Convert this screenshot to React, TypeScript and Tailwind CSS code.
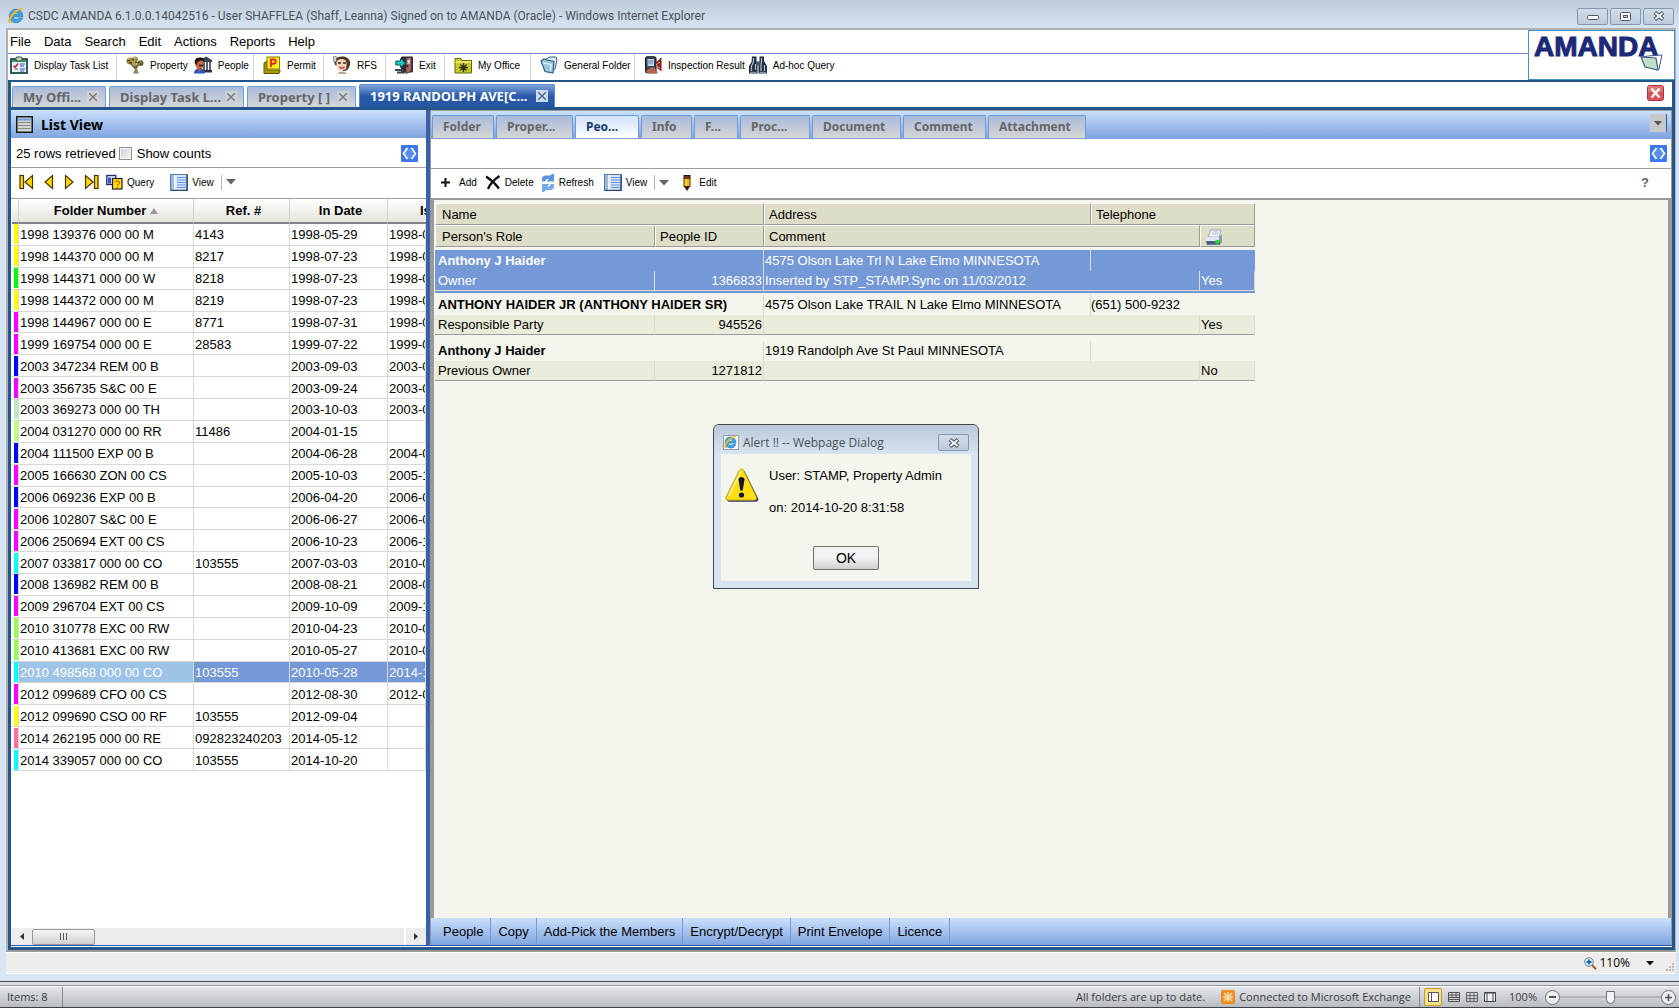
import { useState, type ReactNode } from "react";
import clsx from "clsx";

type FolderRow = {
  color: string;
  folder: string;
  ref: string;
  inDate: string;
  issued: string;
};

const YELLOW = "bg-[#ffff00]";
const LIME = "bg-[#00ff00]";
const MAGENTA = "bg-[#ff00ff]";
const BLUE = "bg-[#0000ff]";
const CYAN = "bg-[#00ffff]";
const SAGE = "bg-[#c0e8c8]";
const PALE_GREEN = "bg-[#c0ff80]";
const GREEN = "bg-[#98ff50]";
const PINK = "bg-[#ff70a0]";

const FOLDERS: FolderRow[] = [
  { color: YELLOW, folder: "1998 139376 000 00 M", ref: "4143", inDate: "1998-05-29", issued: "1998-0" },
  { color: YELLOW, folder: "1998 144370 000 00 M", ref: "8217", inDate: "1998-07-23", issued: "1998-0" },
  { color: LIME, folder: "1998 144371 000 00 W", ref: "8218", inDate: "1998-07-23", issued: "1998-0" },
  { color: YELLOW, folder: "1998 144372 000 00 M", ref: "8219", inDate: "1998-07-23", issued: "1998-0" },
  { color: MAGENTA, folder: "1998 144967 000 00 E", ref: "8771", inDate: "1998-07-31", issued: "1998-0" },
  { color: MAGENTA, folder: "1999 169754 000 00 E", ref: "28583", inDate: "1999-07-22", issued: "1999-0" },
  { color: BLUE, folder: "2003 347234 REM 00 B", ref: "", inDate: "2003-09-03", issued: "2003-0" },
  { color: MAGENTA, folder: "2003 356735 S&C 00 E", ref: "", inDate: "2003-09-24", issued: "2003-0" },
  { color: SAGE, folder: "2003 369273 000 00 TH", ref: "", inDate: "2003-10-03", issued: "2003-0" },
  { color: PALE_GREEN, folder: "2004 031270 000 00 RR", ref: "11486", inDate: "2004-01-15", issued: "" },
  { color: BLUE, folder: "2004 111500 EXP 00 B", ref: "", inDate: "2004-06-28", issued: "2004-0" },
  { color: MAGENTA, folder: "2005 166630 ZON 00 CS", ref: "", inDate: "2005-10-03", issued: "2005-1" },
  { color: BLUE, folder: "2006 069236 EXP 00 B", ref: "", inDate: "2006-04-20", issued: "2006-0" },
  { color: MAGENTA, folder: "2006 102807 S&C 00 E", ref: "", inDate: "2006-06-27", issued: "2006-0" },
  { color: MAGENTA, folder: "2006 250694 EXT 00 CS", ref: "", inDate: "2006-10-23", issued: "2006-1" },
  { color: CYAN, folder: "2007 033817 000 00 CO", ref: "103555", inDate: "2007-03-03", issued: "2010-0" },
  { color: BLUE, folder: "2008 136982 REM 00 B", ref: "", inDate: "2008-08-21", issued: "2008-0" },
  { color: MAGENTA, folder: "2009 296704 EXT 00 CS", ref: "", inDate: "2009-10-09", issued: "2009-1" },
  { color: GREEN, folder: "2010 310778 EXC 00 RW", ref: "", inDate: "2010-04-23", issued: "2010-0" },
  { color: GREEN, folder: "2010 413681 EXC 00 RW", ref: "", inDate: "2010-05-27", issued: "2010-0" },
  { color: CYAN, folder: "2010 498568 000 00 CO", ref: "103555", inDate: "2010-05-28", issued: "2014-1" },
  { color: MAGENTA, folder: "2012 099689 CFO 00 CS", ref: "", inDate: "2012-08-30", issued: "2012-0" },
  { color: YELLOW, folder: "2012 099690 CSO 00 RF", ref: "103555", inDate: "2012-09-04", issued: "" },
  { color: PINK, folder: "2014 262195 000 00 RE", ref: "092823240203", inDate: "2014-05-12", issued: "" },
  { color: CYAN, folder: "2014 339057 000 00 CO", ref: "103555", inDate: "2014-10-20", issued: "" },
];

const PEOPLE = [
  {
    name: "Anthony J Haider",
    role: "Owner",
    id: "1366833",
    address: "4575 Olson Lake Trl N Lake Elmo MINNESOTA",
    comment: "Inserted by STP_STAMP.Sync on 11/03/2012",
    phone: "",
    print: "Yes",
    gap: "h-[3px]",
  },
  {
    name: "ANTHONY HAIDER JR (ANTHONY HAIDER SR)",
    role: "Responsible Party",
    id: "945526",
    address: "4575 Olson Lake TRAIL N Lake Elmo MINNESOTA",
    comment: "",
    phone: "(651) 500-9232",
    print: "Yes",
    gap: "h-[2px]",
  },
  {
    name: "Anthony J Haider",
    role: "Previous Owner",
    id: "1271812",
    address: "1919 Randolph Ave St Paul MINNESOTA",
    comment: "",
    phone: "",
    print: "No",
    gap: "h-[6px]",
  },
];

const MENUS = ["File", "Data", "Search", "Edit", "Actions", "Reports", "Help"];

const SUB_TABS = [
  { label: "Folder", width: "w-[62px]" },
  { label: "Proper...", width: "w-[77px]" },
  { label: "Peo...", width: "w-[64px]" },
  { label: "Info", width: "w-[51px]" },
  { label: "F...", width: "w-[44px]" },
  { label: "Proc...", width: "w-[70px]" },
  { label: "Document", width: "w-[89px]" },
  { label: "Comment", width: "w-[83px]" },
  { label: "Attachment", width: "w-[98px]" },
];

const ACTIONS = ["People", "Copy", "Add-Pick the Members", "Encrypt/Decrypt", "Print Envelope", "Licence"];

/* ---------- icons ---------- */

function IeIcon({ size = 16 }: { size?: number }) {
  return (
    <svg width={size} height={size} viewBox="0.5 1 15 14.5" aria-hidden="true" className="shrink-0">
      <path
        d="M8 1.800a6.400 6.400 0 1 0 6.100 8.400h-3.600a2.800 2.800 0 0 1-5.200-1.200h9.100A6.400 6.400 0 0 0 8 1.800zM5.400 6.900a2.700 2.700 0 0 1 5.200 0z"
        fill="#3fa4e0"
        stroke="#1d77bd"
        strokeWidth=".6"
      />
      <path
        d="M1.600 14.600C-.6 12.400 3.200 5.400 8.600 2.400 12.400.3 15.600.2 15.300 3.400c.1-1.800-2.300-1.800-5 .1C5.800 6.300 2.100 11.400 2.800 13.400c.3.9 1.600.9 3.100.1-1.700 1.300-3.500 1.900-4.300 1.100z"
        fill="#f2b41f"
      />
    </svg>
  );
}

function TaskIcon() {
  return (
    <svg width="18" height="18" viewBox="0 0 18 18" aria-hidden="true">
      <rect x="1" y="3" width="16" height="14" fill="#e9f2ff" stroke="#1c4a4a" strokeWidth="1.800" />
      <rect x="2" y="4" width="14" height="2" fill="#3d9a5c" />
      <rect x="6" y="1" width="6" height="4" rx="1" fill="#c9d6a0" stroke="#345" />
      <path d="M3.500 9.500l1.500 2 3-4" fill="none" stroke="#d02040" strokeWidth="1.600" />
      <path d="M10 8h5M10 10h4M5 13h3M10 13h5M10 15h4" stroke="#2a50b0" />
    </svg>
  );
}

function TreeIcon() {
  return (
    <svg width="18" height="18" viewBox="0 0 18 18" aria-hidden="true">
      <path d="M8 8l1 5-2 4.500h6l-2-4.500 2-4" fill="#8c8a5a" />
      <path d="M5 8l4 4 4-4" fill="none" stroke="#6b5a2c" strokeWidth="1.600" />
      <circle cx="4" cy="5" r="3.500" fill="#a08a44" />
      <circle cx="9" cy="3.500" r="3" fill="#9a9448" />
      <circle cx="14.500" cy="7" r="3" fill="#6f7a3c" />
      <circle cx="8" cy="7" r="2.500" fill="#c09a4c" />
      <path d="M1 5l3-1M6 3l2 1M12 7l3-2M9 6l3 1M14 9l3-1M3 7l3 0" stroke="#47491c" strokeWidth="1.300" />
      <path d="M2 3h2M8 2h2M13 5h2" stroke="#e8cf7c" />
    </svg>
  );
}

function PeopleIcon() {
  return (
    <svg width="18" height="18" viewBox="0 0 18 18" aria-hidden="true">
      <path d="M6 4l6-3.500L18 4v2H6z" fill="#3c4452" />
      <path d="M9 6h2v9H9zM12 6h2v9h-2zM15 6h2v9h-2z" fill="#5a6578" />
      <rect x="8" y="14" width="10" height="2.500" fill="#2c333e" />
      <path d="M1 6c1-3.500 7-4 8-1v5c0 2-1 3.500-3.500 3.500S1.500 11 1.500 9z" fill="#c96b3d" />
      <path d="M1 8c-1.500-5 2-7 6-6.500 2.500.3 3.500 1.500 3 3.500L7 4.500 3.500 6 2.500 9z" fill="#25150e" />
      <path d="M5 9.500h4" stroke="#3a1b10" strokeWidth="1.600" />
      <path d="M0 17.500c0-3 2-5 5.500-5s5.500 2 5.500 5z" fill="#2858b8" />
      <path d="M4 12.500l1 4 2.500-4z" fill="#e24030" />
    </svg>
  );
}

function PermitIcon() {
  return (
    <svg width="18" height="18" viewBox="0 0 18 18" aria-hidden="true">
      <path d="M1 7l3-2v9h13v1l-1 2.500H1z" fill="#a8a000" stroke="#5a5200" />
      <rect x="4" y="1" width="12.500" height="12" fill="#ffee20" stroke="#8a7a00" />
      <path d="M8 11V3.500h2.700a2.100 2.100 0 0 1 0 4.200H8" fill="none" stroke="#e02818" strokeWidth="1.900" />
    </svg>
  );
}

function RfsIcon() {
  return (
    <svg width="18" height="18" viewBox="0 0 18 18" aria-hidden="true">
      <path d="M2 9C0 3 5 0 9.500.5 14 0 18 4 17 9l-2 4z" fill="#4a3424" />
      <path d="M3.500 6c1-4 9-4 10 0 .5 5-.5 9-4.500 10-4-1-6-5-5.500-10z" fill="#f3d3b8" />
      <path d="M5 7h3M10 7h3" stroke="#2b2420" strokeWidth="1.400" />
      <path d="M6.500 11c1.500 1.500 3.500 1.500 5 0" fill="none" stroke="#b5302a" strokeWidth="1.400" />
      <rect x=".5" y="0" width="3" height="6" rx="1.500" fill="#d4d4d4" stroke="#555" strokeWidth=".6" />
      <path d="M15 9c.5 4-1.500 5.500-5 5.500" fill="none" stroke="#333" strokeWidth="1.200" />
      <path d="M6 16h6l2 2H5z" fill="#b8a890" />
    </svg>
  );
}

function ExitIcon() {
  return (
    <svg width="18" height="18" viewBox="0 0 18 18" aria-hidden="true">
      <path d="M6.500 1h11v15h-11z" fill="#2a2f36" stroke="#40302e" />
      <path d="M11 2l5.500-1v14L11 17.500z" fill="#a8645c" stroke="#333" strokeWidth=".8" />
      <path d="M12.500 4l2.500-.5v4l-2.500.5z" fill="#cfd4da" />
      <circle cx="12.500" cy="10" r=".9" fill="#111" />
      <path d="M0 13h9v2H0zM2 15.500h8v2H2z" fill="#3a4450" />
      <path d="M.8 5h4.700V2.500L10.500 7 5.500 11.500V9H.8z" fill="#22c4c0" stroke="#06605e" />
    </svg>
  );
}

function OfficeIcon() {
  return (
    <svg width="18" height="18" viewBox="0 0 18 18" aria-hidden="true">
      <path d="M1 2.500h6l1 2h9.500v12.500H1z" fill="#c8c828" stroke="#6a6408" />
      <path d="M1.500 6h15.500" stroke="#f4f080" strokeWidth="1.500" />
      <path d="M9.500 7v9M5 11.500h9M6.500 8.500l6 6M12.500 8.500l-6 6" stroke="#33300a" strokeWidth="1.300" />
    </svg>
  );
}

function FolderIcon() {
  return (
    <svg width="18" height="18" viewBox="0 0 18 18" aria-hidden="true">
      <path d="M6 3l4-2h6l1 3-2 9-4 3z" fill="#e4f0f8" stroke="#3b5f80" />
      <path d="M1 5l3-2 3 1 7 1.500-1 11.500-8-1.500z" fill="#9cc8dc" stroke="#2f5f88" strokeWidth="1.200" />
      <path d="M3 7l8 1.500-.5 6" fill="none" stroke="#e4f6ff" strokeWidth="1.200" />
    </svg>
  );
}

function InspectionIcon() {
  return (
    <svg width="18" height="18" viewBox="0 0 18 18" aria-hidden="true">
      <rect x="1.500" y=".8" width="10.500" height="16" rx="1.500" fill="#3a4452" stroke="#11161d" />
      <rect x="3.500" y="3" width="6.500" height="7" fill="#b8d4ea" />
      <path d="M4 5h5M4 7h5" stroke="#6088a8" />
      <path d="M2 15l6-4 3 1 3 5.500H4z" fill="#b8644c" />
      <path d="M11.500 7L17.500 1v14.500l-5-4z" fill="#8c241c" />
      <path d="M12 9l4-3M12 10l4 2" stroke="#f0b0a0" />
    </svg>
  );
}

function BinocularsIcon() {
  return (
    <svg width="18" height="18" viewBox="0 0 18 18" aria-hidden="true">
      <path d="M3 .5h4.500V5L8.500 8v9.500H0V10l2.500-4z" fill="#1f2a38" />
      <path d="M10.500.5H15V5l3 5v7.500H9.500V8l1-3z" fill="#1f2a38" />
      <rect x="7" y="5.500" width="4" height="4" fill="#44566c" />
      <path d="M4.500 2v4L2.500 10v5M12.500 2v4l-.5 4v5M6.500 8v6M15.500 9v6" stroke="#a8bccf" strokeWidth="1.300" fill="none" />
      <path d="M1 16.500h6.500M10.500 16.500H17" stroke="#8298ae" strokeWidth="1.500" />
    </svg>
  );
}

function ListIcon() {
  return (
    <svg width="17" height="17" viewBox="0 0 17 17" aria-hidden="true">
      <rect x=".75" y=".75" width="15.500" height="15.500" fill="#d2d2d2" stroke="#1a1a1a" strokeWidth="1.500" />
      <path d="M2 3.500h13" stroke="#6e9fd8" strokeWidth="2" />
      <path d="M2 6.500h13M2 9.500h13M2 12.500h13" stroke="#8c8c8c" />
    </svg>
  );
}

function CollapseIcon() {
  return (
    <svg width="17" height="17" viewBox="0 0 17 17" aria-hidden="true">
      <rect width="17" height="17" rx="1" fill="#3b78ee" />
      <rect x="4" y="3" width="9" height="11" fill="#6ba2ff" opacity=".6" />
      <path d="M6.500 3L2.500 8.500l4 5.500M10.500 3l4 5.500-4 5.500" fill="none" stroke="#fff" strokeWidth="1.700" />
    </svg>
  );
}

function NavIcon({ kind }: { kind: "first" | "prev" | "next" | "last" }) {
  if (kind === "prev" || kind === "next") {
    return (
      <svg width="10" height="16" viewBox="0 0 10 16" aria-hidden="true">
        <path
          d={kind === "prev" ? "M8.500 1.500v13L1 8z" : "M1.500 1.500v13L9 8z"}
          fill="#ffd800"
          stroke="#4a3400"
          strokeWidth="1.200"
        />
      </svg>
    );
  }
  return (
    <svg width="15" height="16" viewBox="0 0 15 16" aria-hidden="true">
      <g fill="#ffd800" stroke="#4a3400" strokeWidth="1.200">
        <path d={kind === "first" ? "M13.500 1.500v13L6 8z" : "M1.500 1.500v13L9 8z"} />
        <rect x={kind === "first" ? 1 : 10.5} y="1.500" width="3.500" height="13" />
      </g>
    </svg>
  );
}

function QueryIcon() {
  return (
    <svg width="17" height="16" viewBox="0 0 17 16" aria-hidden="true">
      <rect x=".8" y="1.500" width="9" height="9" fill="#e8ecff" stroke="#222a6c" strokeWidth="1.300" />
      <path d="M2 3.500h3v6H2z" fill="#3a50c8" />
      <rect x="6.500" y="4.500" width="9.500" height="10.500" fill="#ffe400" stroke="#1b1b3a" strokeWidth="1.200" />
      <path d="M9 8.500c0-2 4.500-2 4.500.2 0 1.400-2.200 1.300-2.200 2.800M11.300 12.500v1.300" fill="none" stroke="#e07000" strokeWidth="1.500" />
    </svg>
  );
}

function ViewIcon() {
  return (
    <svg width="18" height="17" viewBox="0 0 18 17" aria-hidden="true">
      <rect x=".5" y=".5" width="17" height="16" fill="#d8e8fa" stroke="#5878a8" />
      <path d="M1 1h3v15H1z" fill="#9cb8dc" />
      <path d="M4.500 1v15" stroke="#fff" />
      <path d="M7 3.500h9M7 6h9M7 8.500h9M7 11h9M7 13.500h9" stroke="#5c90dc" />
      <path d="M17 1v15.500H1" fill="none" stroke="#2c4470" strokeWidth="1.400" />
    </svg>
  );
}

function CaretDown({ className }: { className?: string }) {
  return (
    <svg width="10" height="6" viewBox="0 0 10 6" aria-hidden="true" className={className}>
      <path d="M0 0h10L5 5.500z" fill="currentColor" />
    </svg>
  );
}

function AddIcon() {
  return (
    <svg width="9" height="9" viewBox="0 0 9 9" aria-hidden="true">
      <path d="M4.500 0v9M0 4.500h9" stroke="#111" strokeWidth="2" />
    </svg>
  );
}

function DeleteIcon() {
  return (
    <svg width="16" height="15" viewBox="0 0 16 15" aria-hidden="true">
      <path d="M1 1.500C5 4 10 8 14 13.500M14.500 1C10 4 5 9 3 14" fill="none" stroke="#0a0a0a" strokeWidth="2.200" />
    </svg>
  );
}

function RefreshIcon() {
  return (
    <svg width="14" height="18" viewBox="0 0 14 18" aria-hidden="true">
      <path d="M1 7.500V5c0-2 1.500-3.500 3.500-3.500H9L11 0h2v7.500H5.500L8 5H5.500L4 7.500z" fill="#5f93e4" />
      <path d="M13 10v2.500c0 2-1.500 3.500-3.500 3.500H5l-2 2H1v-8h7.500L6 12.500h2.500L10 10z" fill="#78a8f0" />
    </svg>
  );
}

function PencilIcon() {
  return (
    <svg width="8" height="16" viewBox="0 0 8 16" aria-hidden="true">
      <rect x="1" y=".5" width="6" height="3" fill="#7a2f20" stroke="#331008" />
      <rect x="1" y="3.500" width="6" height="8" fill="#f2b414" stroke="#5c3c00" />
      <path d="M3 4v7" stroke="#ffe680" />
      <path d="M1 11.500h6L4 16z" fill="#2a1d10" />
    </svg>
  );
}

function PrinterIcon() {
  return (
    <svg width="18" height="17" viewBox="0 0 18 17" aria-hidden="true">
      <path d="M6 1h10l-2 7H3z" fill="#f4f8fd" stroke="#8b9bb0" strokeWidth=".8" />
      <path d="M7.500 3h6M7 5h6" stroke="#a8b8cc" />
      <path d="M1 8h13l3-3v8l-2 3H2l-1-2z" fill="#8a9ab4" />
      <path d="M1 8h13v4H1z" fill="#dfe7f2" />
      <path d="M1 12h14v3.500H2z" fill="#4c5f80" />
      <rect x="10.500" y="11" width="4" height="3.500" fill="#20e020" />
    </svg>
  );
}

function WarningIcon() {
  return (
    <svg width="34" height="35" viewBox="0 0 34 35" aria-hidden="true">
      <path d="M17.500 2.500c1.200 0 2 .6 2.700 2L33 30c.8 2-.2 3.800-2.400 3.800H4.500c-2 0-3-1.500-2.200-3.300L15 4.300c.6-1.200 1.500-1.800 2.500-1.800z" fill="#35356a" />
      <path d="M16.500 1c1 0 1.700.6 2.400 1.900l12.400 25.800c.8 1.900 0 3.500-2 3.500H3c-2 0-2.600-1.500-1.800-3.300L14 3c.7-1.400 1.500-2 2.500-2z" fill="#ffdf10" stroke="#a88d10" strokeWidth=".8" />
      <path d="M16 3L4 28" stroke="#fff6a0" strokeWidth="1.500" />
      <path d="M13.500 11.500c0-3.500 6-3.500 6 0l-1.800 11h-2.400z" fill="#14143c" />
      <circle cx="16.500" cy="27" r="2.600" fill="#14143c" />
    </svg>
  );
}

function GlassX() {
  return (
    <svg width="12" height="10" viewBox="0 0 12 10" aria-hidden="true">
      <path d="M2 1.500l8 7M10 1.500l-8 7" stroke="#4c5666" strokeWidth="4" />
      <path d="M2.500 2l7 6M9.500 2l-7 6" stroke="#f4f7fa" strokeWidth="2" />
    </svg>
  );
}

/* ---------- shell ---------- */

function WindowButton({ label, children }: { label: string; children: ReactNode }) {
  return (
    <button
      type="button"
      aria-label={label}
      className="flex h-[17px] w-[31px] items-center justify-center rounded-xs border border-[#8497b0] bg-linear-to-b from-[#d0dce9] to-[#bccbdc]"
    >
      {children}
    </button>
  );
}

function TitleBar() {
  return (
    <header className="flex h-7 shrink-0 items-center bg-linear-to-b from-[#bccbd9] to-[#d7e4f1] pt-1 pr-[5px] pl-2">
      <IeIcon />
      <h1 className="ml-1 flex-1 font-['Roboto','Open_Sans',sans-serif] text-[12px] text-[#4a5058]">
        CSDC AMANDA 6.1.0.0.14042516 - User SHAFFLEA (Shaff, Leanna) Signed on to AMANDA (Oracle) - Windows Internet
        Explorer
      </h1>
      <div className="flex gap-[2px]">
        <WindowButton label="Minimize">
          <svg width="12" height="6" viewBox="0 0 12 6" className="mt-1">
            <rect x=".5" y=".5" width="11" height="4" rx="1" fill="#fff" stroke="#4c5666" />
          </svg>
        </WindowButton>
        <WindowButton label="Restore">
          <svg width="11" height="9" viewBox="0 0 11 9">
            <rect x=".5" y=".5" width="10" height="8" rx="1" fill="#fff" stroke="#4c5666" />
            <rect x="3.500" y="3.500" width="4" height="2" fill="#c0cedd" stroke="#4c5666" />
          </svg>
        </WindowButton>
        <WindowButton label="Close">
          <GlassX />
        </WindowButton>
      </div>
    </header>
  );
}

function ToolButton({ icon, label }: { icon: ReactNode; label: string }) {
  return (
    <button type="button" className="flex items-center gap-[6px] text-[10px] whitespace-nowrap">
      {icon}
      <span>{label}</span>
    </button>
  );
}

function ToolGroup({ width, children }: { width: string; children: ReactNode }) {
  return <div className={clsx("flex items-start gap-[6px] border-r border-[#d8d4cc] pt-[2px] pl-[9px]", width)}>{children}</div>;
}

function MainMenu() {
  return (
    <div className="flex h-[50px] shrink-0">
      <div className="flex flex-1 flex-col">
        <nav className="flex h-6 items-center gap-[13px] border-b border-[#6b8ccc] pl-[2px] text-[13px]">
          {MENUS.map((m) => (
            <button key={m} type="button">
              {m}
            </button>
          ))}
        </nav>
        <div className="flex flex-1">
          <div className="flex w-[109px] items-start border-r border-[#d8d4cc] pt-[2px] pl-[2px]">
            <ToolButton icon={<TaskIcon />} label="Display Task List" />
          </div>
          <ToolGroup width="w-[137px]">
            <ToolButton icon={<TreeIcon />} label="Property" />
            <ToolButton icon={<PeopleIcon />} label="People" />
          </ToolGroup>
          <ToolGroup width="w-[70px]">
            <ToolButton icon={<PermitIcon />} label="Permit" />
          </ToolGroup>
          <ToolGroup width="w-[62px]">
            <ToolButton icon={<RfsIcon />} label="RFS" />
          </ToolGroup>
          <ToolGroup width="w-[59px]">
            <ToolButton icon={<ExitIcon />} label="Exit" />
          </ToolGroup>
          <ToolGroup width="w-[86px]">
            <ToolButton icon={<OfficeIcon />} label="My Office" />
          </ToolGroup>
          <ToolGroup width="w-[104px]">
            <ToolButton icon={<FolderIcon />} label="General Folder" />
          </ToolGroup>
          <div className="flex items-start gap-1 pt-[2px] pl-[9px]">
            <ToolButton icon={<InspectionIcon />} label="Inspection Result" />
            <ToolButton icon={<BinocularsIcon />} label="Ad-hoc Query" />
          </div>
        </div>
      </div>
      <div className="relative w-[147px] border border-[#4a90c4]">
        <div className="pl-[5px] text-[28px] leading-8 font-bold text-[#1c2878] [-webkit-text-stroke:1px_#1c2878]">
          AMANDA
        </div>
        <svg width="24" height="18" viewBox="0 0 24 18" aria-hidden="true" className="absolute top-[23px] left-[111px]">
          <path d="M2 3l6-1 14-1-3 14-3 1z" fill="#fff" stroke="#3f5a8c" />
          <path d="M1 3l15 1 2 12-13-3z" fill="#bfe0c4" stroke="#3f5a8c" strokeWidth="1.200" />
        </svg>
      </div>
    </div>
  );
}

function PageTab({ label, width, active }: { label: string; width: string; active?: boolean }) {
  return (
    <div
      className={clsx(
        "flex items-center justify-between rounded-t-xs border border-b-0 pr-[6px] pl-[10px] font-['Noto_Sans',sans-serif] text-[13px] leading-5 font-bold whitespace-nowrap",
        active
          ? "h-[23px] border-[#5b8ad4] bg-linear-to-b from-[#7fa4dc] via-[#2a5aa8] to-[#2455a4] text-white"
          : "h-[21px] border-[#6c9ce0] bg-linear-to-b from-[#a9bbdb] to-[#d6d6d6] text-[#666]",
        width,
      )}
    >
      <button type="button">{label}</button>
      <button
        type="button"
        aria-label={`Close ${label}`}
        className={clsx("flex size-3 items-center justify-center", active ? "bg-[#c9dcf4] text-[#4a5c80]" : "bg-[#cdd0d6] text-[#777]")}
      >
        <svg width="8" height="8" viewBox="0 0 8 8" aria-hidden="true">
          <path d="M0 0l8 8M8 0L0 8" stroke="currentColor" strokeWidth="1.300" />
        </svg>
      </button>
    </div>
  );
}

function PageTabs() {
  return (
    <div className="flex h-[25px] shrink-0 items-end gap-[3px] bg-white pr-2 pl-[1px]">
      <PageTab label="My Offi..." width="w-[94px]" />
      <PageTab label="Display Task L..." width="w-[135px]" />
      <PageTab label="Property [ ]" width="w-[109px]" />
      <PageTab label="1919 RANDOLPH AVE[C..." width="w-[196px]" active />
      <button type="button" aria-label="Close page" className="mb-[6px] ml-auto">
        <svg width="17" height="16" viewBox="0 0 17 16" aria-hidden="true">
          <rect x=".5" y=".5" width="16" height="15" rx="2" fill="#d8545a" stroke="#a8383c" />
          <path d="M1 1h15v6H1z" fill="#e88a88" opacity=".6" />
          <path d="M4.500 3.500l8 9M12.500 3.500l-8 9" stroke="#fff" strokeWidth="2.400" />
        </svg>
      </button>
    </div>
  );
}

function ViewMenu() {
  return (
    <div className="flex items-center">
      <button type="button" className="flex items-center gap-1">
        <ViewIcon />
        View
      </button>
      <button type="button" aria-label="View options" className="ml-[7px] flex h-[15px] items-center border-l border-[#b4b4b4] pl-1">
        <CaretDown className="text-[#666]" />
      </button>
    </div>
  );
}

/* ---------- left: folder list ---------- */

function ListView() {
  const [selected, setSelected] = useState("2010 498568 000 00 CO");

  return (
    <section className="flex w-[415px] shrink-0 flex-col bg-white">
      <div className="flex h-7 shrink-0 items-center gap-2 bg-linear-to-b from-[#cbe0fb] to-[#7fa4e0] pl-[5px]">
        <ListIcon />
        <h2 className="font-['Noto_Sans',sans-serif] text-[14px] font-bold">List View</h2>
      </div>
      <div className="flex h-[30px] shrink-0 items-center border-b border-[#a0a0a0] pt-[2px] pr-2 pl-[5px] text-[13px]">
        <span>25 rows retrieved</span>
        <label className="ml-[3px] flex items-center gap-[5px]">
          <input
            type="checkbox"
            className="size-[13px] appearance-none border border-[#8e8f8f] bg-linear-to-br from-[#cbcfd5] to-[#f6f6f6] ring-1 ring-[#f4f4f4] ring-inset"
          />
          Show counts
        </label>
        <button type="button" aria-label="Collapse list" className="ml-auto">
          <CollapseIcon />
        </button>
      </div>
      <div className="flex h-[31px] shrink-0 items-center border-b border-[#a0a0a0] pb-[2px] pl-[8px] text-[10px]">
        <div className="flex w-20 items-center justify-between">
          <button type="button" aria-label="First">
            <NavIcon kind="first" />
          </button>
          <button type="button" aria-label="Previous">
            <NavIcon kind="prev" />
          </button>
          <button type="button" aria-label="Next">
            <NavIcon kind="next" />
          </button>
          <button type="button" aria-label="Last">
            <NavIcon kind="last" />
          </button>
        </div>
        <button type="button" className="mr-4 ml-[7px] flex items-center gap-1">
          <QueryIcon />
          Query
        </button>
        <ViewMenu />
      </div>
      <div className="min-h-0 flex-1 overflow-hidden pl-[1px]">
        <table className="h-[572px] w-[414px] table-fixed border-separate border-spacing-0 text-[13px] leading-[18px]">
          <colgroup>
            <col className="w-[7px]" />
            <col className="w-[175px]" />
            <col className="w-[96px]" />
            <col className="w-[98px]" />
            <col />
          </colgroup>
          <thead>
            <tr className="h-[25px]">
              <th className="border-r border-b-2 border-[#d4d4cc] border-b-[#808488] bg-linear-to-b from-white to-[#e4e4dc]" />
              <th className="border-r border-b-2 border-[#d4d4cc] border-b-[#808488] bg-linear-to-b from-white to-[#e4e4dc]">
                <span className="inline-flex items-center gap-1">
                  Folder Number
                  <svg width="8" height="6" viewBox="0 0 8 6" aria-hidden="true">
                    <path d="M4 0l4 6H0z" fill="#999" />
                  </svg>
                </span>
              </th>
              <th className="border-r border-b-2 border-[#d4d4cc] border-b-[#808488] bg-linear-to-b from-white to-[#e4e4dc] pl-1">
                Ref. #
              </th>
              <th className="border-r border-b-2 border-[#d4d4cc] border-b-[#808488] bg-linear-to-b from-white to-[#e4e4dc] pl-1">
                In Date
              </th>
              <th className="overflow-hidden border-b-2 border-[#808488] bg-linear-to-b from-white to-[#e4e4dc] pl-8 text-left">
                Is
              </th>
            </tr>
          </thead>
          <tbody>
            {FOLDERS.map((row) => {
              const on = row.folder === selected;
              const cell = "overflow-hidden border-r border-b border-[#d8d8d4] pt-[2px] pl-[1px] whitespace-nowrap";
              const fill = on && "bg-[#7499d6] text-white";
              return (
                <tr key={row.folder} onClick={() => setSelected(row.folder)}>
                  <td className="border-r border-b border-[#d8d8d4] p-0 pl-[2px]">
                    <div className={clsx("h-5", row.color)} />
                  </td>
                  <td className={clsx(cell, on && "bg-[#9dc3e6] text-white")}>{row.folder}</td>
                  <td className={clsx(cell, fill)}>{row.ref}</td>
                  <td className={clsx(cell, fill)}>{row.inDate}</td>
                  <td className={clsx(cell, fill)}>{row.issued}</td>
                </tr>
              );
            })}
          </tbody>
        </table>
      </div>
      <div className="flex h-[17px] shrink-0 items-center bg-[#ececec]">
        <button type="button" aria-label="Scroll left" className="flex h-full w-[21px] items-center justify-center">
          <svg width="4" height="7" viewBox="0 0 4 7" aria-hidden="true">
            <path d="M4 0v7L0 3.500z" fill="#333" />
          </svg>
        </button>
        <div className="flex h-4 w-[63px] items-center justify-center gap-[2px] rounded-xs border border-[#989898] bg-linear-to-b from-[#f4f4f4] via-[#e4e4e6] to-[#cfcfd2]">
          <span className="h-[7px] w-px bg-[#555]" />
          <span className="h-[7px] w-px bg-[#555]" />
          <span className="h-[7px] w-px bg-[#555]" />
        </div>
        <button
          type="button"
          aria-label="Scroll right"
          className="ml-auto flex h-full w-[22px] items-center justify-center border-l-2 border-white"
        >
          <svg width="4" height="7" viewBox="0 0 4 7" aria-hidden="true">
            <path d="M0 0v7l4-3.500z" fill="#333" />
          </svg>
        </button>
      </div>
    </section>
  );
}

/* ---------- right: people ---------- */

function HeadCell({ span, first, children }: { span: number; first?: boolean; children?: ReactNode }) {
  return (
    <th
      colSpan={span}
      className={clsx(
        "h-[22px] overflow-hidden border-t border-r border-b border-l border-t-white border-r-[#9a9a9a] border-b-[#9a9a9a] border-l-white bg-[#deddc8] pt-[2px] pb-0 text-left font-normal",
        first ? "pl-[6px]" : "pl-1",
      )}
    >
      {children}
    </th>
  );
}

function PeopleTable() {
  const [selected, setSelected] = useState("1366833");

  return (
    <table className="w-[820px] table-fixed border-separate border-spacing-0 text-[13px] leading-[18px]">
      <colgroup>
        <col className="w-[220px]" />
        <col className="w-[109px]" />
        <col className="w-[327px]" />
        <col className="w-[109px]" />
        <col className="w-[55px]" />
      </colgroup>
      <thead>
        <tr>
          <HeadCell span={2} first>
            Name
          </HeadCell>
          <HeadCell span={1}>Address</HeadCell>
          <HeadCell span={2}>Telephone</HeadCell>
        </tr>
        <tr>
          <HeadCell span={1} first>
            Person's Role
          </HeadCell>
          <HeadCell span={1}>People ID</HeadCell>
          <HeadCell span={2}>Comment</HeadCell>
          <HeadCell span={1}>
            <PrinterIcon />
          </HeadCell>
        </tr>
      </thead>
      {PEOPLE.map((p) => {
        const on = p.id === selected;
        const top = clsx("border-r py-0 pr-0", on ? "h-[21px] border-[#dcdccc]" : "h-5 border-[#d8d8cc]");
        const bottom = clsx("h-5 border-r border-b py-0", on ? "border-[#dcdccc]" : "border-r-[#dcdccc] border-b-[#9a9a9a] bg-[#e9ebdb]");
        return (
          <tbody key={p.id} onClick={() => setSelected(p.id)} className={on ? "bg-[#7499d6] text-white" : undefined}>
            {/* gap above each record */}
            <tr className="bg-[#f4f5ec]">
              <td colSpan={5} className={clsx("p-0", p.gap)} />
            </tr>
            <tr>
              <td colSpan={2} className={clsx(top, "pl-[3px] font-bold")}>
                {p.name}
              </td>
              <td className={clsx(top, "pl-[1px]")}>{p.address}</td>
              <td colSpan={2} className="p-0">
                {p.phone}
              </td>
            </tr>
            <tr>
              <td className={clsx(bottom, "pl-[3px]")}>{p.role}</td>
              <td className={clsx(bottom, "pr-[1px] text-right")}>{p.id}</td>
              <td colSpan={2} className={clsx(bottom, "pl-[1px]")}>
                {p.comment}
              </td>
              <td className={clsx(bottom, "pl-[1px]")}>{p.print}</td>
            </tr>
            {on && (
              <tr>
                <td colSpan={5} className="h-[2px] p-0" />
              </tr>
            )}
          </tbody>
        );
      })}
    </table>
  );
}

function FolderPanel() {
  const [tab, setTab] = useState("Peo...");

  return (
    <section className="flex min-w-0 flex-1 flex-col border-t border-r border-l border-[#9a9a9a] bg-white">
      <div className="flex h-7 shrink-0 items-end gap-[2px] border-b border-[#7fa4e0] bg-linear-to-b from-[#cbe0fb] to-[#7fa4e0] pr-1 pl-[1px]">
        {SUB_TABS.map((t) => (
          <button
            key={t.label}
            type="button"
            onClick={() => setTab(t.label)}
            className={clsx(
              "h-[23px] rounded-t-xs border border-b-0 border-[#6c9ce0] pl-[10px] text-left font-['Noto_Sans',sans-serif] text-[12px] leading-5 font-bold whitespace-nowrap",
              tab === t.label
                ? "bg-linear-to-b from-[#d0e2fb] to-white text-[#123a70]"
                : "bg-linear-to-b from-[#a9bbdb] to-[#d6d6d6] text-[#666]",
              t.width,
            )}
          >
            {t.label}
          </button>
        ))}
        <button
          type="button"
          aria-label="More tabs"
          className="mb-[6px] ml-auto flex h-[18px] w-[17px] items-center justify-center border-r border-[#2b5cb0] bg-[#c6c8cc]"
        >
          <svg width="8" height="5" viewBox="0 0 8 5" aria-hidden="true">
            <path d="M0 0h8L4 4.500z" fill="#555" />
          </svg>
        </button>
      </div>
      <div className="flex h-[30px] shrink-0 items-center justify-end border-b border-[#a0a0a0] pr-1">
        <button type="button" aria-label="Collapse panel">
          <CollapseIcon />
        </button>
      </div>
      <div className="flex h-[31px] shrink-0 items-center border-b-2 border-[#9a9a9a] pb-[2px] pl-[10px] text-[10px]">
        <button type="button" className="mr-2 flex items-center gap-[9px]">
          <AddIcon />
          Add
        </button>
        <button type="button" className="mr-[7px] flex items-center gap-1">
          <DeleteIcon />
          Delete
        </button>
        <button type="button" className="mr-[10px] flex items-center gap-1">
          <RefreshIcon />
          Refresh
        </button>
        <ViewMenu />
        <button type="button" className="ml-[14px] flex items-center gap-2">
          <PencilIcon />
          Edit
        </button>
        <button type="button" aria-label="Help" className="mr-[22px] ml-auto text-[13px] font-bold text-[#666]">
          ?
        </button>
      </div>
      <div className="min-h-0 flex-1 overflow-hidden border-r-[3px] border-l-[3px] border-[#9a9a9a] bg-[#f4f5ec] pt-[3px] pl-[1px]">
        <PeopleTable />
      </div>
      <div className="flex h-[27px] shrink-0 bg-linear-to-b from-[#cbe0fb] to-[#7fa4e0] pl-[5px] text-[13px]">
        {ACTIONS.map((a) => (
          <button key={a} type="button" className="border-r border-[#7499d6] px-[7px]">
            {a}
          </button>
        ))}
      </div>
    </section>
  );
}

/* ---------- status bars ---------- */

function BrowserStatus() {
  return (
    <div className="mr-[3px] ml-[6px] flex h-[22px] shrink-0 items-center justify-end border-y border-white bg-[#f0eceb] font-['Open_Sans',sans-serif] text-[12px]">
      <svg width="13" height="13" viewBox="0 0 13 13" aria-hidden="true">
        <circle cx="5" cy="5" r="4.300" fill="#e4f1fb" stroke="#6a8098" />
        <path d="M5 2.500v5M2.500 5h5" stroke="#1668c0" strokeWidth="1.800" />
        <path d="M8 8l4 4.300" stroke="#a8602c" strokeWidth="2" />
      </svg>
      <span className="ml-[2px]">110%</span>
      <button type="button" aria-label="Change zoom level" className="mr-[12px] ml-4">
        <svg width="8" height="5" viewBox="0 0 8 5" aria-hidden="true">
          <path d="M0 0h8L4 4.500z" fill="#111" />
        </svg>
      </button>
      <svg width="9" height="9" viewBox="0 0 9 9" aria-hidden="true" className="mt-2 mr-[1px]">
        <path d="M6 0h2v2H6zM6 3h2v2H6zM6 6h2v2H6zM3 3h2v2H3zM3 6h2v2H3zM0 6h2v2H0z" fill="#bdb9b8" />
      </svg>
    </div>
  );
}

function OutlookStatus() {
  return (
    <footer className="flex h-[22px] shrink-0 items-center border-t border-b border-t-white border-b-[#3c4248] bg-linear-to-b from-[#e2e5e8] to-[#b9bdc2] pl-[7px] font-['Open_Sans',sans-serif] text-[11px] text-[#3b3b3b]">
      <span className="mr-auto flex h-full w-[56px] items-center border-r border-[#868a8e]">Items: 8</span>
      <span>All folders are up to date.</span>
      <svg width="14" height="14" viewBox="0 0 14 14" aria-hidden="true" className="mr-1 ml-4">
        <rect width="14" height="14" rx="2" fill="#f08a1c" />
        <path d="M3 3l8 8M11 3l-8 8M7 2v3M7 9v3M2 7h3M9 7h3" stroke="#ffe9b8" strokeWidth="1.500" />
      </svg>
      <span>Connected to Microsoft Exchange</span>
      <div className="ml-2 flex h-full items-center gap-[6px] border-l border-[#868a8e] pl-1">
        <button
          type="button"
          aria-label="Normal view"
          className="flex size-[18px] items-center justify-center rounded-xs border border-[#c29a30] bg-[#fbe08a]"
        >
          <svg width="11" height="10" viewBox="0 0 11 10" aria-hidden="true">
            <path d="M.5.5h10v9H.5zM3.500.5v9" fill="#fff" stroke="#555" />
          </svg>
        </button>
        <button type="button" aria-label="Week view">
          <svg width="12" height="10" viewBox="0 0 12 10" aria-hidden="true">
            <path d="M.5.5h11v9H.5zM4 .5v5M8 .5v5M.5 3h11M.5 5.500h11M.5 7.500h11" fill="none" stroke="#555" />
          </svg>
        </button>
        <button type="button" aria-label="Month view">
          <svg width="12" height="10" viewBox="0 0 12 10" aria-hidden="true">
            <path d="M.5.5h11v9H.5zM4 .5v9M8 .5v9M.5 3.500h11M.5 6.500h11" fill="none" stroke="#666" />
          </svg>
        </button>
        <button type="button" aria-label="Reading view">
          <svg width="12" height="10" viewBox="0 0 12 10" aria-hidden="true">
            <path d="M.5.5h11v9H.5zM3 1v9M9 1v9M0 1h12" fill="#f2f2f2" stroke="#444" />
          </svg>
        </button>
      </div>
      <span className="ml-[13px]">100%</span>
      <button
        type="button"
        aria-label="Zoom out"
        className="ml-2 flex size-[15px] items-center justify-center rounded-full border border-[#6c7074] bg-[#eceef0]"
      >
        <span className="h-[2px] w-[7px] bg-[#555]" />
      </button>
      <input
        type="range"
        aria-label="Zoom"
        defaultValue={50}
        className="h-[14px] w-[101px] appearance-none bg-linear-to-b from-transparent from-45% via-[#6c7074] via-50% to-transparent to-55% [&::-webkit-slider-thumb]:h-[13px] [&::-webkit-slider-thumb]:w-[9px] [&::-webkit-slider-thumb]:appearance-none [&::-webkit-slider-thumb]:rounded-b-full [&::-webkit-slider-thumb]:border [&::-webkit-slider-thumb]:border-[#6c7074] [&::-webkit-slider-thumb]:bg-[#f4f5f6]"
      />
      <button
        type="button"
        aria-label="Zoom in"
        className="mr-[3px] flex size-[15px] items-center justify-center rounded-full border border-[#6c7074] bg-[#eceef0]"
      >
        <svg width="7" height="7" viewBox="0 0 7 7" aria-hidden="true">
          <path d="M3.500 0v7M0 3.500h7" stroke="#555" strokeWidth="1.600" />
        </svg>
      </button>
    </footer>
  );
}

function AlertDialog() {
  return (
    <div
      role="dialog"
      aria-labelledby="alert-title"
      className="absolute top-[424px] left-[713px] w-[266px] rounded-t-md border border-[#45484c] bg-[#d7e4f1]"
    >
      <div className="flex h-[29px] items-center rounded-t-md bg-linear-to-b from-[#b9c8d8] to-[#d7e4f1] pt-[6px] pr-[9px] pl-[9px]">
        <div className="flex h-[15px] w-4 items-center border border-[#9a9fa6] bg-white">
          <IeIcon size={13} />
        </div>
        <h2 id="alert-title" className="ml-1 flex-1 font-['Open_Sans',sans-serif] text-[12px] text-[#4a5058]">
          Alert !! -- Webpage Dialog
        </h2>
        <WindowButton label="Close dialog">
          <GlassX />
        </WindowButton>
      </div>
      <div className="mx-[7px] mb-[7px] flex h-[127px] flex-col bg-[#f4f5ec] text-[13px] leading-4">
        <div className="flex gap-[10px] pt-[14px] pl-1">
          <WarningIcon />
          <div className="flex flex-col gap-4">
            <p>User: STAMP, Property Admin</p>
            <p>on: 2014-10-20 8:31:58</p>
          </div>
        </div>
        <button
          type="button"
          className="mt-[30px] ml-[92px] h-6 w-[66px] rounded-xs border border-[#707070] bg-linear-to-b from-[#f2f2f2] from-50% to-[#cfcfcf] text-[14px]"
        >
          OK
        </button>
      </div>
    </div>
  );
}

export default function App() {
  return (
    <div className="relative flex h-screen flex-col overflow-hidden bg-[#d7e4f1] font-['Liberation_Sans',Arial,sans-serif] text-black">
      <TitleBar />
      <div className="mr-[3px] ml-[6px] flex min-h-0 flex-1 flex-col border-2 border-r border-[#b0b0b0] border-b-[#9a9a98] bg-white">
        <MainMenu />
        <div className="flex min-h-0 flex-1 flex-col border-[3px] border-t-2 border-[#24568c]">
          <PageTabs />
          <div className="flex min-h-0 flex-1 flex-col border-t-[3px] border-[#24568c]">
            <div className="flex min-h-0 flex-1 border-b border-[#2858a8]">
              <ListView />
              <div className="w-1 shrink-0 bg-[#3a60a8]" />
              <FolderPanel />
            </div>
            <div className="h-px bg-white" />
          </div>
        </div>
      </div>
      <BrowserStatus />
      <div className="h-[7px] shrink-0" />
      <div className="h-[5px] shrink-0 border-t border-b border-t-[#44484c] border-b-[#90949a] bg-[#dadfe6]" />
      <OutlookStatus />
      <AlertDialog />
    </div>
  );
}
